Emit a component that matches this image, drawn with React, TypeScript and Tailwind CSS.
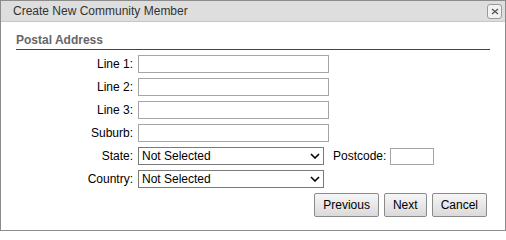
import React from "react";

const Chevron = () => (
  <svg width="10" height="6" viewBox="0 0 10 6" className="pointer-events-none absolute right-[4px] top-[6px]">
    <path d="M1 1 L5 5 L9 1" fill="none" stroke="#000" strokeWidth="1.6" />
  </svg>
);

const TextRow = ({ label }: { label: string }) => (
  <div className="flex h-[18px] items-center">
    <label className="w-[122px] pr-[5px] text-right">{label}</label>
    <input type="text" className="h-[18px] w-[191px] border border-[#a5a5a5] bg-white outline-none" />
  </div>
);

const SelectBox = () => (
  <div className="relative h-[18px] w-[186px]">
    <select className="h-[18px] w-full appearance-none border border-[#7a7a7a] bg-white pl-[3px] text-[12px] leading-[16px] outline-none">
      <option>Not Selected</option>
    </select>
    <Chevron />
  </div>
);

export default function App() {
  return (
    <div className="flex h-[231px] w-[506px] flex-col border border-[#8c8c8c] bg-white font-['Liberation_Sans',Arial,sans-serif] text-[12px] leading-[14px] text-black">
      {/* title bar */}
      <div className="flex h-[21px] shrink-0 items-center justify-between border-b border-[#c6c6c6] bg-[#dedede] pl-[12px] pr-[3px]">
        <span className="text-[#333]">Create New Community Member</span>
        <button className="flex h-[15px] w-[15px] items-center justify-center rounded-[3px] border border-[#9a9a9a] bg-[#f2f2f2]">
          <svg width="8" height="7" viewBox="0 0 8 7">
            <path d="M1 1 L7 6 M7 1 L1 6" stroke="#555" strokeWidth="1.3" />
          </svg>
        </button>
      </div>

      <div className="flex flex-col px-[15px]">
        <div className="border-b border-[#444] pb-[2px] pt-[11px] font-bold text-[#666]">Postal Address</div>

        <div className="mt-[5px] flex flex-col gap-[5px]">
          <TextRow label="Line 1:" />
          <TextRow label="Line 2:" />
          <TextRow label="Line 3:" />
          <TextRow label="Suburb:" />
          <div className="flex h-[18px] items-center">
            <label className="w-[122px] pr-[5px] text-right">State:</label>
            <SelectBox />
            <label className="ml-[9px] mr-[4px]">Postcode:</label>
            <input type="text" className="h-[17px] w-[44px] border border-[#a5a5a5] bg-white outline-none" />
          </div>
          <div className="flex h-[18px] items-center">
            <label className="w-[122px] pr-[5px] text-right">Country:</label>
            <SelectBox />
          </div>
        </div>

        <div className="mr-[3px] mt-[5px] flex justify-end gap-[5px]">
          {["Previous", "Next", "Cancel"].map((b) => (
            <button
              key={b}
              className="h-[24px] rounded-[2px] border border-[#8a8a8a] bg-gradient-to-b from-[#f6f6f6] to-[#dadada] px-[8px] text-[12px]"
            >
              {b}
            </button>
          ))}
        </div>
      </div>
    </div>
  );
}
